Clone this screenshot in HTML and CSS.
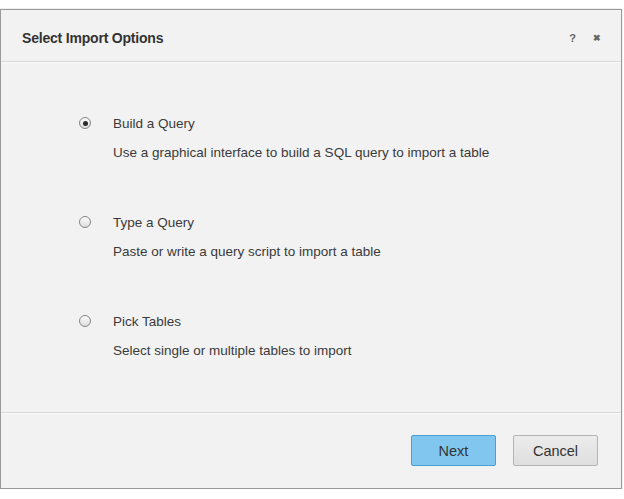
FILE: index.html
```html
<!DOCTYPE html>
<html>
<head>
<meta charset="utf-8">
<link rel="stylesheet" href="styles.css">
</head>
<body>
<div class="dialog">
  <div class="header">
    <span class="title">Select Import Options</span>
    <span class="tools"><span class="help">?</span><span class="close">&#x2716;</span></span>
  </div>
  <div class="content">
    <div class="option">
      <div class="row"><span class="radio checked"></span><span class="label">Build a Query</span></div>
      <div class="desc">Use a graphical interface to build a SQL query to import a table</div>
    </div>
    <div class="option">
      <div class="row"><span class="radio"></span><span class="label">Type a Query</span></div>
      <div class="desc">Paste or write a query script to import a table</div>
    </div>
    <div class="option">
      <div class="row"><span class="radio"></span><span class="label">Pick Tables</span></div>
      <div class="desc">Select single or multiple tables to import</div>
    </div>
  </div>
  <div class="footer">
    <button class="btn primary">Next</button>
    <button class="btn">Cancel</button>
  </div>
</div>
</body>
</html>
```
FILE: styles.css
```css
html, body { margin: 0; padding: 0; background: #fff; }
body { font-family: "Liberation Sans", Arial, sans-serif; color: #3a3a3a; }
.dialog {
  margin-top: 9px;
  width: 620px;
  height: 478px;
  background: #f2f2f2;
  border: 1px solid #9a9a9a;
  box-shadow: 0 0 1px 0 rgba(0,0,0,0.35);
  display: flex;
  flex-direction: column;
}
.header {
  height: 52px;
  border-bottom: 1px solid #d8d8d8;
  box-shadow: 0 1px 0 #fafafa;
  display: flex;
  align-items: center;
  justify-content: space-between;
  padding: 4px 20px 0 21px;
  box-sizing: border-box;
  flex: none;
}
.title { font-weight: bold; font-size: 14px; color: #333; letter-spacing: -0.2px; }
.tools { display: flex; gap: 17px; color: #666; font-weight: bold; font-size: 11px; align-items: center; }
.close { font-size: 9px; }
.content { flex: 1; min-height: 0; padding: 61px 0 0 77px; }
.option { margin-bottom: 62px; }
.option:last-child { margin-bottom: 0; }
.row { display: flex; align-items: center; height: 14px; margin-top: -7px; }
.radio {
  width: 12px; height: 12px; border-radius: 50%;
  border: 1px solid #858585;
  background: linear-gradient(#fafafa, #dedede);
  box-sizing: border-box;
  position: relative;
  margin-right: 22px;
  margin-left: 1px;
}
.radio.checked::after {
  content: ""; position: absolute; left: 2.5px; top: 2.5px;
  width: 5px; height: 5px; border-radius: 50%; background: #2a2a2a;
}
.label { font-size: 13.5px; color: #3a3a3a; }
.desc { font-size: 13.5px; margin: 15px 0 0 35px; color: #3a3a3a; }
.footer {
  height: 75px;
  border-top: 1px solid #d8d8d8;
  box-shadow: inset 0 1px 0 #fafafa;
  display: flex;
  justify-content: flex-end;
  align-items: center;
  gap: 17px;
  padding-right: 23px;
  flex: none;
}
.btn {
  width: 85px; height: 31px;
  font-family: "Liberation Sans", Arial, sans-serif;
  font-size: 14.5px; color: #333;
  border: 1px solid #b4b4b4; border-radius: 2px;
  background: linear-gradient(#ececec, #dedede);
  padding: 0;
}
.btn.primary { background: #80c6ef; border-color: #4a9fd5; }
```
